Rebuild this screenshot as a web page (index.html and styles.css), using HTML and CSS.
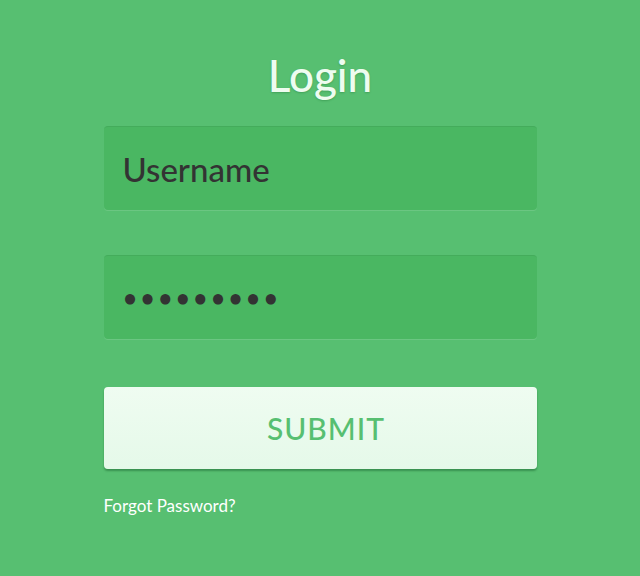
FILE: index.html
```html
<!DOCTYPE html>
<html lang="en">

<head>
    <meta charset="UTF-8">
    <meta name="viewport" content="width=device-width, initial-scale=1">
    <title>Login</title>
    <link rel="stylesheet" href="styles.css">
</head>

<body>
    <div class="login">
        <h1>Login</h1>
        <form id="loginForm" class="login-form">
            <input type="text" class="field" value="Username" aria-label="Username">
            <input type="password" class="field field-password" value="secret123" aria-label="Password">
            <button type="submit" class="btn-submit">SUBMIT</button>
        </form>
        <a href="#" class="forgot">Forgot Password?</a>
    </div>
</body>

</html>
```

FILE: styles.css
```css
body {
    font-family: 'Lato', sans-serif;
    margin: 0;
    background-color: #57BF71; /* Green */
    min-height: 576px;
}

.login {
    width: 433px;
    margin: 0 auto;
    padding-top: 47px;
}

h1 {
    margin: 0 0 23px;
    text-align: center;
    font-size: 44px;
    font-weight: 500;
    line-height: 56px;
    color: #EEFCF0;
    text-shadow: 0 1px 2px rgba(0, 80, 20, 0.25);
}

.login-form {
    display: flex;
    flex-direction: column;
}

.field {
    box-sizing: border-box;
    width: 100%;
    height: 84px;
    margin: 0 0 45px;
    padding: 0 19px;
    border: none;
    border-top: 1px solid #44AC5B;
    border-radius: 4px;
    background-color: #4AB762;
    box-shadow: 0 1px 0 rgba(255, 255, 255, 0.12);
    font-family: 'Lato', sans-serif;
    font-size: 33px;
    font-weight: 500;
    color: #333333;
    outline: none;
}

.field-password {
    margin-bottom: 48px;
    padding-left: 19px;
    font-size: 26px;
    letter-spacing: 2.5px;
}

.btn-submit {
    height: 82px;
    padding: 0 0 0 12px;
    border: none;
    border-radius: 4px;
    background: linear-gradient(#EFFCF1, #E5F9E9);
    box-shadow: 0 2px 2px rgba(0, 60, 20, 0.35);
    font-family: 'Lato', sans-serif;
    font-size: 30px;
    font-weight: 500;
    letter-spacing: 1px;
    color: #57BF71;
    cursor: pointer;
}

.forgot {
    display: block;
    margin-top: 26px;
    font-size: 17px;
    font-weight: 400;
    color: #FFFFFF;
    text-decoration: none;
}
```
